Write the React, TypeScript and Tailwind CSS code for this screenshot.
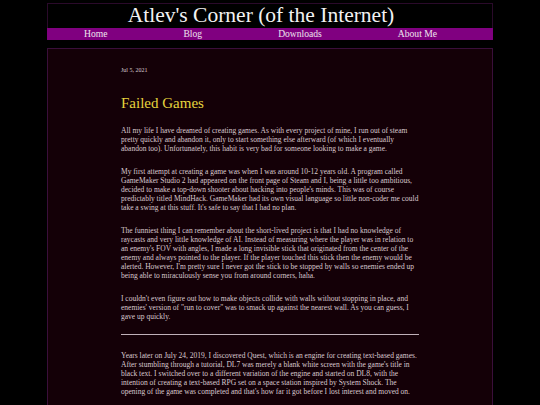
import React from "react";

export default function App() {
  const serif = { fontFamily: '"Liberation Serif", "Times New Roman", serif' };
  return (
    <div className="min-h-screen bg-black pt-[3px]" style={serif}>
      <div className="mx-auto w-[446px]">
        <div className="flex h-[25px] items-center justify-center border border-b-0 border-[#2a0a2a] pr-[18px] text-[21.5px] leading-none text-[#f2f2f2]">
          Atlev's Corner (of the Internet)
        </div>
        <nav className="flex h-[12px] items-center gap-[76px] bg-[#800080] pl-[37px] text-[9.6px] leading-none text-[#eee4ee]">
          <span>Home</span>
          <span>Blog</span>
          <span>Downloads</span>
          <span>About Me</span>
        </nav>
      </div>
      <main className="mx-auto mt-[8px] w-[446px] border border-[#3a0f3a] bg-[#140007] pb-[40px]">
        <div className="mx-auto w-[298px] pt-[17px] text-[#d9c9cf]">
          <div className="text-[6px] leading-[8px]">Jul 5, 2021</div>
          <h1 className="mt-[20px] text-[15px] leading-[18px] text-[#e6d43e]">Failed Games</h1>
          <div className="mt-[14px] flex flex-col gap-[14px] text-[7.5px] leading-[9px]">
            <p>
              All my life I have dreamed of creating games. As with every project of mine, I run out of steam pretty quickly and abandon it, only to start something else afterward (of which I eventually abandon too). Unfortunately, this habit is very bad for someone looking to make a game.
            </p>
            <p>
              My first attempt at creating a game was when I was around 10-12 years old. A program called GameMaker Studio 2 had appeared on the front page of Steam and I, being a little too ambitious, decided to make a top-down shooter about hacking into people's minds. This was of course predictably titled MindHack. GameMaker had its own visual language so little non-coder me could take a swing at this stuff. It's safe to say that I had no plan.
            </p>
            <p>
              The funniest thing I can remember about the short-lived project is that I had no knowledge of raycasts and very little knowledge of AI. Instead of measuring where the player was in relation to an enemy's FOV with angles, I made a long invisible stick that originated from the center of the enemy and always pointed to the player. If the player touched this stick then the enemy would be alerted. However, I'm pretty sure I never got the stick to be stopped by walls so enemies ended up being able to miraculously sense you from around corners, haha.
            </p>
            <p>
              I couldn't even figure out how to make objects collide with walls without stopping in place, and enemies' version of "run to cover" was to smack up against the nearest wall. As you can guess, I gave up quickly.
            </p>
          </div>
          <hr className="mt-[13px] mb-[16px] border-0 border-t border-[#bfb0b8]" />
          <div className="flex flex-col gap-[14px] text-[7.5px] leading-[9px]">
            <p>
              Years later on July 24, 2019, I discovered Quest, which is an engine for creating text-based games. After stumbling through a tutorial, DL7 was merely a blank white screen with the game's title in black text. I switched over to a different variation of the engine and started on DL8, with the intention of creating a text-based RPG set on a space station inspired by System Shock. The opening of the game was completed and that's how far it got before I lost interest and moved on.
            </p>
          </div>
        </div>
      </main>
    </div>
  );
}
